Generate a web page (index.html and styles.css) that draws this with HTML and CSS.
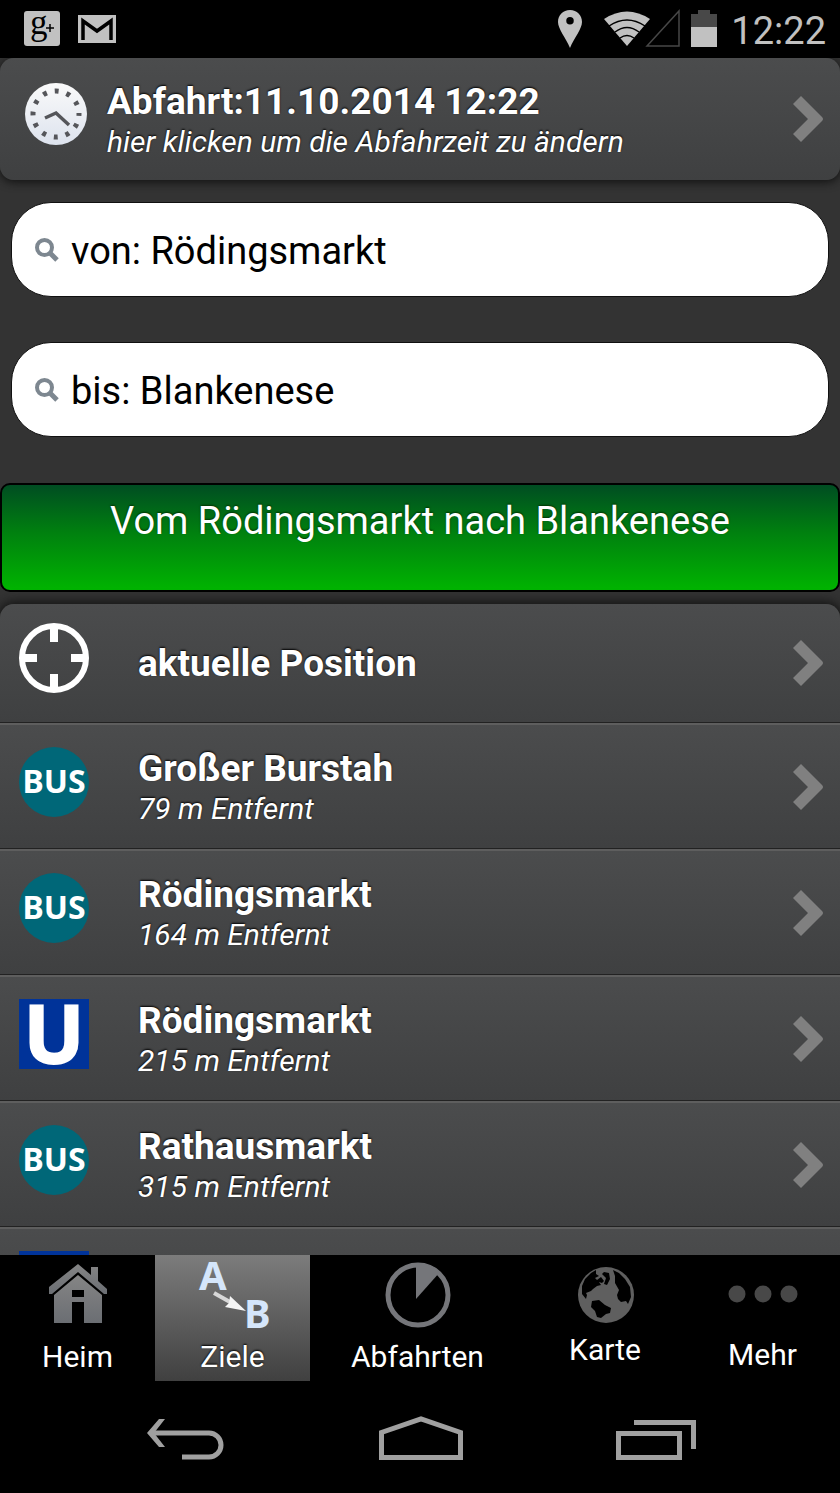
FILE: index.html
```html
<!DOCTYPE html>
<html lang="de">
<head>
<meta charset="utf-8">
<meta name="viewport" content="width=device-width, initial-scale=1">
<title>Ziele</title>
<link rel="stylesheet" href="styles.css">
</head>
<body>
<svg class="defs" width="0" height="0" aria-hidden="true">
  <symbol id="chevron" viewBox="0 0 30 46"><path d="M0 8 8 0 29 21Q31 23 29 25L8 46 0 38 15 23Z" fill="#808080"/></symbol>
  <symbol id="search" viewBox="0 0 24 24"><circle cx="9.500" cy="9.500" r="7.500" fill="none" stroke="#7d8790" stroke-width="4"/><path d="M15 15 22 22" stroke="#7d8790" stroke-width="5"/></symbol>
  <symbol id="bus" viewBox="0 0 70 70"><circle cx="35" cy="35" r="35" fill="#006778"/><text x="35" y="46" text-anchor="middle" class="mark" font-size="32" fill="#fff">BUS</text></symbol>
  <symbol id="ubahn" viewBox="0 0 70 70"><path d="M0 0H70V70H0Z" fill="#003399"/><text x="35" y="64" text-anchor="middle" class="mark" font-size="80" fill="#fff" stroke="#fff" stroke-width="2">U</text></symbol>
</svg>

<div class="screen">
  <header class="status">
    <svg width="36" height="36" viewBox="0 0 36 36"><rect width="36" height="35" rx="3" fill="#c1c1c1"/><text x="6" y="23" font-family="Liberation Serif, serif" font-size="35" fill="#000">g</text><path d="M22 17H30M26 13V21" stroke="#000" stroke-width="1.500"/></svg>
    <svg width="38" height="28" viewBox="0 0 38 28"><path d="M0 0H38V28H0Z" fill="#c1c1c1"/><path d="M5 25V6L19 16 33 6V25" fill="none" stroke="#000" stroke-width="3.500"/></svg>
    <div class="status-right">
      <svg width="24" height="38" viewBox="0 0 24 38"><path fill-rule="evenodd" d="M12 0C5 0 0 5 0 12 0 19 8 28 12 38 16 28 24 19 24 12 24 5 19 0 12 0ZM12 7A3.500 3.500 0 1 1 12 14.500 3.500 3.500 0 0 1 12 7Z" fill="#c1c1c1"/></svg>
      <svg class="signal" width="77" height="38" viewBox="0 0 77 38"><path d="M0 9Q23-6 46 9L23 36Z" fill="#c1c1c1"/><path d="M5 16Q23 4 41 16M11 22Q23 13 35 22M16 28Q23 23 30 28" fill="none" stroke="#000" stroke-width="1.500"/><path d="M43 36 75 1V36Z" fill="none" stroke="#474747" stroke-width="1.500"/></svg>
      <svg width="26" height="38" viewBox="0 0 26 38"><path d="M0 4H7V0H19V4H26V18H0Z" fill="#484848"/><path d="M0 17H26V37H0Z" fill="#c1c1c1"/></svg>
      <time class="clock">12:22</time>
    </div>
  </header>

  <main class="content">
    <a class="card departure" href="#zeit">
      <svg class="departure-icon" width="62" height="62" viewBox="0 0 62 62">
        <defs><linearGradient id="face" x2="0" y2="1"><stop stop-color="#fafafa"/><stop offset="1" stop-color="#dde3ee"/></linearGradient></defs>
        <circle cx="31" cy="31" r="31" fill="url(#face)"/>
        <circle cx="31" cy="31" r="23" fill="none" stroke="#55565a" stroke-width="5" stroke-dasharray="4 8.043" stroke-dashoffset="2"/>
        <path d="M20 35 31 30 44 42" fill="none" stroke="#55565a" stroke-width="3.500"/>
      </svg>
      <span class="text"><strong class="title">Abfahrt:11.10.2014 12:22</strong><em class="sub">hier klicken um die Abfahrzeit zu ändern</em></span>
      <svg class="chevron"><use href="#chevron"/></svg>
    </a>

    <form class="search">
      <label class="field"><svg width="24" height="24"><use href="#search"/></svg><input type="text" value="von: Rödingsmarkt" aria-label="von"></label>
      <label class="field"><svg width="24" height="24"><use href="#search"/></svg><input type="text" value="bis: Blankenese" aria-label="bis"></label>
      <button class="go" type="button">Vom Rödingsmarkt nach Blankenese</button>
    </form>

    <nav class="list">
      <a class="row row-single" href="#position">
        <svg class="icon" viewBox="0 0 70 70"><circle cx="35" cy="35" r="32" fill="none" stroke="#fff" stroke-width="6"/><path d="M35 2V19M35 51V68M2 35H18M52 35H68" stroke="#fff" stroke-width="8"/></svg>
        <span class="text"><strong class="title">aktuelle Position</strong></span>
        <svg class="chevron"><use href="#chevron"/></svg>
      </a>
      <a class="row" href="#burstah"><svg class="icon"><use href="#bus"/></svg><span class="text"><strong class="title">Großer Burstah</strong><em class="sub">79 m Entfernt</em></span><svg class="chevron"><use href="#chevron"/></svg></a>
      <a class="row" href="#roedingsmarkt-bus"><svg class="icon"><use href="#bus"/></svg><span class="text"><strong class="title">Rödingsmarkt</strong><em class="sub">164 m Entfernt</em></span><svg class="chevron"><use href="#chevron"/></svg></a>
      <a class="row" href="#roedingsmarkt-u"><svg class="icon"><use href="#ubahn"/></svg><span class="text"><strong class="title">Rödingsmarkt</strong><em class="sub">215 m Entfernt</em></span><svg class="chevron"><use href="#chevron"/></svg></a>
      <a class="row" href="#rathausmarkt"><svg class="icon"><use href="#bus"/></svg><span class="text"><strong class="title">Rathausmarkt</strong><em class="sub">315 m Entfernt</em></span><svg class="chevron"><use href="#chevron"/></svg></a>
      <a class="row" href="#weitere"><svg class="icon" viewBox="0 0 70 70"><path d="M0 0H70V70H0Z" fill="#003399"/></svg></a>
    </nav>
  </main>

  <nav class="tabs">
    <a class="tab" href="#heim">
      <svg width="60" height="66" viewBox="0 0 60 66"><defs><linearGradient id="metal" x2="0" y2="1"><stop stop-color="#858585"/><stop offset="1" stop-color="#6b6e73"/></linearGradient></defs><path fill="url(#metal)" d="M1 25 30 2 43 13V5H50V19L59 27V32H56L30 10 4 32H1Z"/><path fill="url(#metal)" fill-rule="evenodd" d="M6 33 30 13 54 33V61H36V40H24V61H6ZM24 28V35H36V28Z"/></svg>
      <span>Heim</span>
    </a>
    <a class="tab tab-active" href="#ziele" aria-current="page">
      <svg width="70" height="66" viewBox="0 0 70 66"><text class="mark" x="1" y="28" font-size="40" fill="#d5e6fb">A</text><text class="mark" x="46" y="66" font-size="40" fill="#d5e6fb">B</text><path d="M16 31 32 40" stroke="#d8d8d8" stroke-width="4"/><path d="M32 34 48 49 27 45 31 41Z" fill="#f5f5f5"/></svg>
      <span>Ziele</span>
    </a>
    <a class="tab" href="#abfahrten">
      <svg width="66" height="66" viewBox="0 0 66 66"><circle cx="33" cy="33" r="30" fill="none" stroke="#75767a" stroke-width="5"/><path d="M31 37V2Q45 0 55 10Z" fill="#75767a"/></svg>
      <span>Abfahrten</span>
    </a>
    <a class="tab" href="#karte">
      <svg width="57" height="59" viewBox="0 0 57 59"><circle cx="29" cy="33" r="28" fill="#5f5f5f"/><path d="M19 8 14 11 8 17 5 24 5 32 9 37 10 33 9 31 14 29 16 27 20 24 24 23 22 20 25 21 27 19 24 15 20 18 18 16 22 14 19 12ZM25 12 27 10 32 11 33 17 30 23 27 22 29 16ZM36 8 42 11 48 17 53 25 54 35 51 42 49 39 44 40 41 37 40 33 42 28 38 21 38 14ZM15 39 22 38 28 43 34 46 33 51 29 52 24 56 20 55 18 49 14 45Z"/></svg>
      <span>Karte</span>
    </a>
    <a class="tab" href="#mehr">
      <svg width="70" height="64" viewBox="0 0 70 64"><g fill="#484848"><circle cx="9" cy="32" r="8.500"/><circle cx="35" cy="32" r="8.500"/><circle cx="61" cy="32" r="8.500"/></g></svg>
      <span>Mehr</span>
    </a>
  </nav>

  <footer class="system">
    <button type="button" aria-label="Zurück"><svg width="78" height="45" viewBox="0 0 78 45"><path d="M3 17H62A12 12 0 0 1 62 41H35" fill="none" stroke="#a0a0a0" stroke-width="5"/><path d="M12 3H18L7 17 18 31H12L0 17Z" fill="#a0a0a0"/></svg></button>
    <button type="button" aria-label="Startseite"><svg width="84" height="45" viewBox="0 0 84 45"><path d="M2.500 41.500V16.500L42 3 81.500 16.500V41.500Z" fill="none" stroke="#a0a0a0" stroke-width="5"/></svg></button>
    <button type="button" aria-label="Letzte Apps"><svg width="80" height="45" viewBox="0 0 80 45"><path d="M2.500 17.500H63.500V41.500H2.500ZM18 6.500H77.500V33" fill="none" stroke="#a0a0a0" stroke-width="5"/></svg></button>
  </footer>
</div>
</body>
</html>
```
FILE: styles.css
```css
* {
  box-sizing: border-box;
}

body {
  margin: 0;
  background: #000;
  color: #fff;
  font-family: Roboto, sans-serif;
}

svg {
  display: block;
  flex: none;
  overflow: visible;
  text-shadow: none;
}

.defs {
  position: absolute;
}

.mark {
  font-family: "Noto Sans", sans-serif;
  font-weight: 700;
}

a {
  color: inherit;
  text-decoration: none;
}

.screen {
  display: flex;
  flex-direction: column;
  height: 100vh;
}

/* Status bar */
.status {
  display: flex;
  flex: none;
  align-items: center;
  gap: 18px;
  height: 58px;
  padding: 0 14px 0 24px;
}

.status-right {
  display: flex;
  align-items: center;
  margin-left: auto;
}

.signal {
  margin: 0 10px 0 22px;
}

.clock {
  margin-left: 14px;
  padding-top: 3px;
  color: #c1c1c1;
  font-size: 38px;
}

/* Content */
.content {
  display: flex;
  flex: 1;
  flex-direction: column;
  min-height: 0;
  overflow: hidden;
  background: #333;
}

.card,
.row {
  display: flex;
  flex: none;
  align-items: flex-start;
  padding-right: 17px;
  background: linear-gradient(#4b4c4d, #3f4041);
  text-shadow: 0 -1px 2px #000;
}

.card {
  border-radius: 14px;
  box-shadow: 0 2px 10px #111;
}

.departure {
  gap: 20px;
  padding-left: 25px;
}

.departure-icon {
  margin-top: 25px;
}

.text {
  flex: 1;
  min-width: 0;
  padding: 24px 0 18px;
}

.title,
.sub {
  display: block;
  line-height: 40px;
}

.title {
  font-size: 37px;
}

.sub {
  font-size: 30px;
}

.chevron {
  align-self: center;
  width: 30px;
  height: 46px;
}

.search {
  display: flex;
  flex: none;
  flex-direction: column;
  padding-top: 22px;
}

.field {
  display: flex;
  align-items: center;
  gap: 12px;
  height: 95px;
  margin: 0 11px 45px;
  padding: 0 23px;
  border: 1px solid #111;
  border-radius: 40px;
  background: #fff;
}

.field input {
  flex: 1;
  min-width: 0;
  padding: 2px 0 0;
  border: 0;
  outline: 0;
  background: none;
  color: #000;
  font: 38px Roboto, sans-serif;
}

.go {
  height: 109px;
  margin-top: 1px;
  padding: 0 16px 34px;
  border: 2px solid #000;
  border-radius: 10px;
  background: linear-gradient(#004d22, #00800f 45%, #00b400);
  color: #fff;
  font: 38px Roboto, sans-serif;
  text-shadow: 0 -1px 2px #030;
}

/* Stops */
.list {
  flex: none;
  margin-top: 12px;
  border-radius: 14px 14px 0 0;
  box-shadow: 0 0 12px 2px #111;
}

.row {
  gap: 49px;
  min-height: 126px;
  padding-left: 19px;
  border-top: 2px solid #5e5e5e;
  border-bottom: 1px solid #222;
}

.row .icon {
  width: 70px;
  height: 70px;
  margin-top: 22px;
}

.row-single {
  min-height: 119px;
  border-top: 0;
  border-radius: 14px 14px 0 0;
}

.row-single .icon {
  margin-top: 19px;
}

.row-single .text {
  padding: 40px 0 38px;
}

/* Tab bar */
.tabs {
  display: grid;
  flex: none;
  grid-template-columns: 31fr 31fr 43fr 32fr 31fr;
}

.tab {
  display: flex;
  flex-direction: column;
  align-items: center;
  gap: 11px;
  padding: 7px 0 6px;
  font-size: 30px;
  line-height: 36px;
}

.tab-active {
  background: linear-gradient(#7c7c7c, #404040);
  text-shadow: 0 -1px 2px #000;
}

/* System buttons */
.system {
  display: flex;
  flex: none;
  align-items: center;
  justify-content: space-between;
  height: 112px;
  padding: 2px 144px 0 147px;
}

.system button {
  padding: 0;
  border: 0;
  background: none;
}
```
